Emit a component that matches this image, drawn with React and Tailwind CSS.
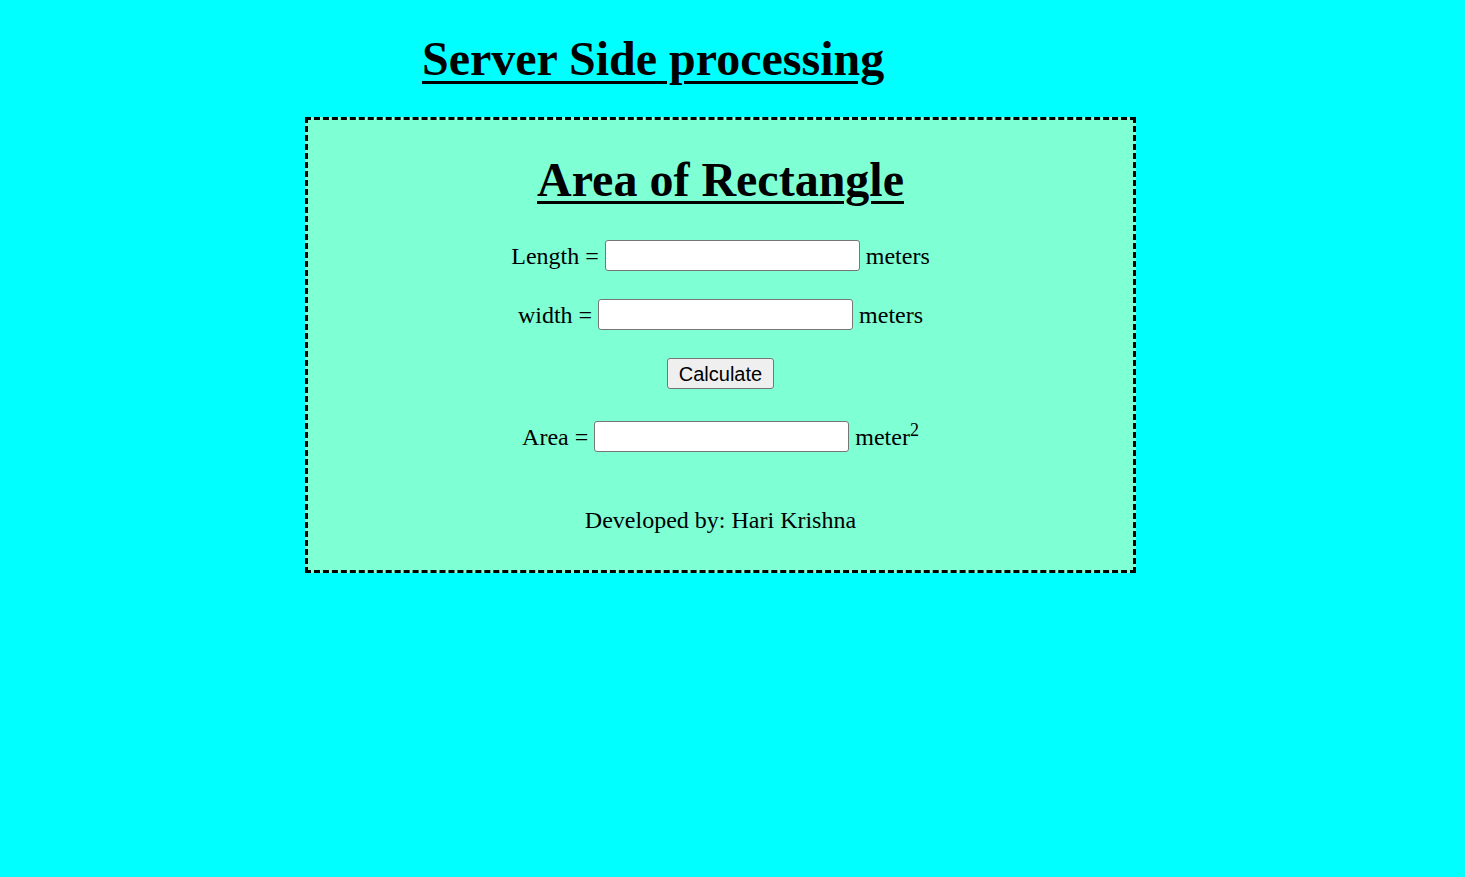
import React from 'react'

const serif = { fontFamily: '"Liberation Serif", "Times New Roman", serif' }

function Field({ label, unit }) {
  return (
    <div className="flex items-center justify-center gap-[6px] h-[31px]">
      <span className="text-[24px] leading-[28px]">{label}</span>
      <input
        type="text"
        className="w-[255px] h-[31px] bg-white border border-[#767676] rounded-[3px] px-[3px] text-[20px] outline-none"
      />
      <span className="text-[24px] leading-[28px]">{unit}</span>
    </div>
  )
}

export default function App() {
  return (
    <div className="min-h-[877px] bg-[#00ffff] text-black pt-[32px]" style={serif}>
      {/* page title */}
      <h1 className="pl-[422px] text-[48px] font-bold underline decoration-[3px] underline-offset-[6px] leading-[53px]">
        Server Side processing
      </h1>

      {/* form box */}
      <div className="ml-[305px] mt-[32px] w-[831px] h-[456px] border-[3px] border-dashed border-black bg-[#7fffd4] flex flex-col items-center">
        <h2 className="mt-[33px] text-[48px] font-bold underline decoration-[3px] underline-offset-[5px] leading-[53px]">
          Area of Rectangle
        </h2>

        <div className="mt-[34px] w-full flex flex-col items-center">
          <Field label="Length =" unit="meters" />
          <div className="mt-[28px]">
            <Field label="width =" unit="meters" />
          </div>
          <button
            type="button"
            className="mt-[28px] w-[107px] h-[31px] bg-[#efefef] border border-[#767676] rounded-[3px] text-[20px] leading-none text-black"
            style={{ fontFamily: '"Liberation Sans", Arial, sans-serif' }}
          >
            Calculate
          </button>
          <div className="mt-[32px] flex items-center justify-center gap-[6px] h-[31px]">
            <span className="text-[24px] leading-[28px]">Area =</span>
            <input
              type="text"
              className="w-[255px] h-[31px] bg-white border border-[#767676] rounded-[3px] px-[3px] text-[20px] outline-none"
            />
            <span className="text-[24px] leading-[28px]">
              meter<sup>2</sup>
            </span>
          </div>
          <p className="mt-[54px] text-[24px] leading-[28px]">Developed by: Hari Krishna</p>
        </div>
      </div>
    </div>
  )
}
